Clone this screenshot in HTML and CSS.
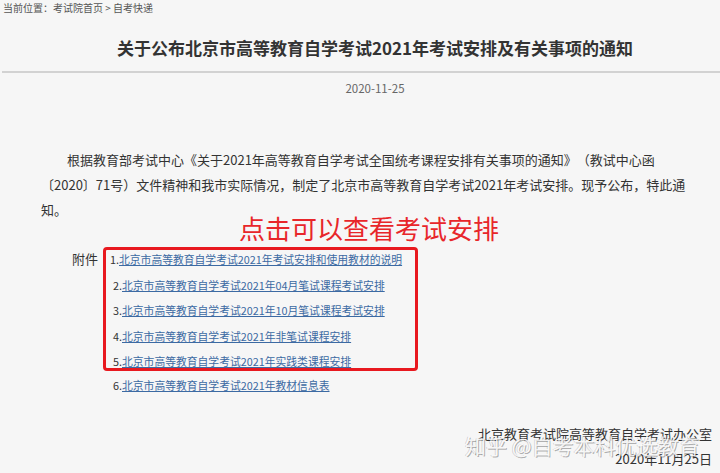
FILE: index.html
```html
<!DOCTYPE html>
<html lang="zh-CN">
<head>
    <meta charset="UTF-8">
    <meta name="viewport" content="width=device-width, initial-scale=1.0">
    <title>关于公布北京市高等教育自学考试2021年考试安排及有关事项的通知</title>
    <link rel="stylesheet" href="styles.css">
</head>
<body>
    <div class="crumb">当前位置：考试院首页 &gt; 自考快递</div>

    <h1 class="title">关于公布北京市高等教育自学考试2021年考试安排及有关事项的通知</h1>
    <hr>
    <div class="date">2020-11-25</div>

    <div class="content">
        <p class="para">根据教育部考试中心《关于2021年高等教育自学考试全国统考课程安排有关事项的通知》（教试中心函〔2020〕71号）文件精神和我市实际情况，制定了北京市高等教育自学考试2021年考试安排。现予公布，特此通知。</p>

        <div class="note">点击可以查看考试安排</div>

        <!-- attachments -->
        <div class="attach">
            <span class="attach-label">附件</span>
            <div class="attach-list">
                <div class="marked">
                    <div class="item first">1.<a href="#">北京市高等教育自学考试2021年考试安排和使用教材的说明</a></div>
                    <div class="item">2.<a href="#">北京市高等教育自学考试2021年04月笔试课程考试安排</a></div>
                    <div class="item">3.<a href="#">北京市高等教育自学考试2021年10月笔试课程考试安排</a></div>
                    <div class="item">4.<a href="#">北京市高等教育自学考试2021年非笔试课程安排</a></div>
                    <div class="item">5.<a href="#">北京市高等教育自学考试2021年实践类课程安排</a></div>
                </div>
                <div class="item last">6.<a href="#">北京市高等教育自学考试2021年教材信息表</a></div>
            </div>
        </div>

        <div class="sign">
            <div>北京教育考试院高等教育自学考试办公室</div>
            <div>2020年11月25日</div>
        </div>
    </div>

    <div class="watermark">知乎 @自考本科优选教育</div>
</body>
</html>
```

FILE: styles.css
```css
/* General Reset */
* {
    margin: 0;
    padding: 0;
    box-sizing: border-box;
}

body {
    font-family: "Noto Sans CJK SC", "Liberation Sans", sans-serif;
    background: #f6f6f6;
    color: #333;
    width: 720px;
    height: 473px;
    overflow: hidden;
    position: relative;
}

.crumb {
    font-size: 10px;
    line-height: 16px;
    color: #555;
    padding-left: 3px;
}

.title {
    margin-top: 20px;
    padding-left: 30px;
    font-size: 17px;
    line-height: 24px;
    font-weight: bold;
    text-align: center;
    color: #333;
}

hr {
    border: 0;
    height: 2px;
    background: #d2d2d2;
    margin: 11px 0 0 2px;
}

.date {
    margin-top: 7px;
    padding-left: 30px;
    font-size: 11.5px;
    line-height: 16px;
    color: #666;
    text-align: center;
}

.content {
    padding: 0 23px 0 41px;
}

.para {
    margin-top: 51px;
    font-size: 13px;
    line-height: 25px;
    text-indent: 2em;
    text-spacing-trim: space-all;
    color: #333;
}

.note {
    margin-top: -9px;
    font-size: 26px;
    line-height: 30px;
    color: #e8262a;
    text-align: center;
}

.attach {
    display: flex;
    margin-top: 4px;
    padding-left: 31px;
}

.attach-label {
    width: 31px;
    font-size: 13px;
    line-height: 24px;
    color: #333;
}

.marked {
    width: 315px;
    border: 3px solid #e8191f;
    border-radius: 4px;
    padding: 2px 0 0 4px;
    display: flex;
    flex-direction: column;
    gap: 11.6px;
}

.item {
    font-size: 10.8px;
    line-height: 14px;
    color: #333;
    padding-left: 3px;
    white-space: nowrap;
}

.item.first {
    padding-left: 0;
}

.item.last {
    margin-top: 7px;
    padding-left: 10px;
}

.item a {
    color: #3c6aa3;
    text-decoration: underline;
}

.sign {
    margin-top: 29px;
    font-size: 13px;
    line-height: 25px;
    text-align: right;
    padding-right: 8px;
    margin-right: -23px;
}

.watermark {
    position: absolute;
    left: 465px;
    top: 432px;
    font-size: 21px;
    line-height: 26px;
    color: rgba(255, 255, 255, 0.85);
    text-shadow: 1px 1px 0 rgba(0, 0, 0, 0.3), -1px 0 0 rgba(0, 0, 0, 0.15);
    white-space: nowrap;
}
```
